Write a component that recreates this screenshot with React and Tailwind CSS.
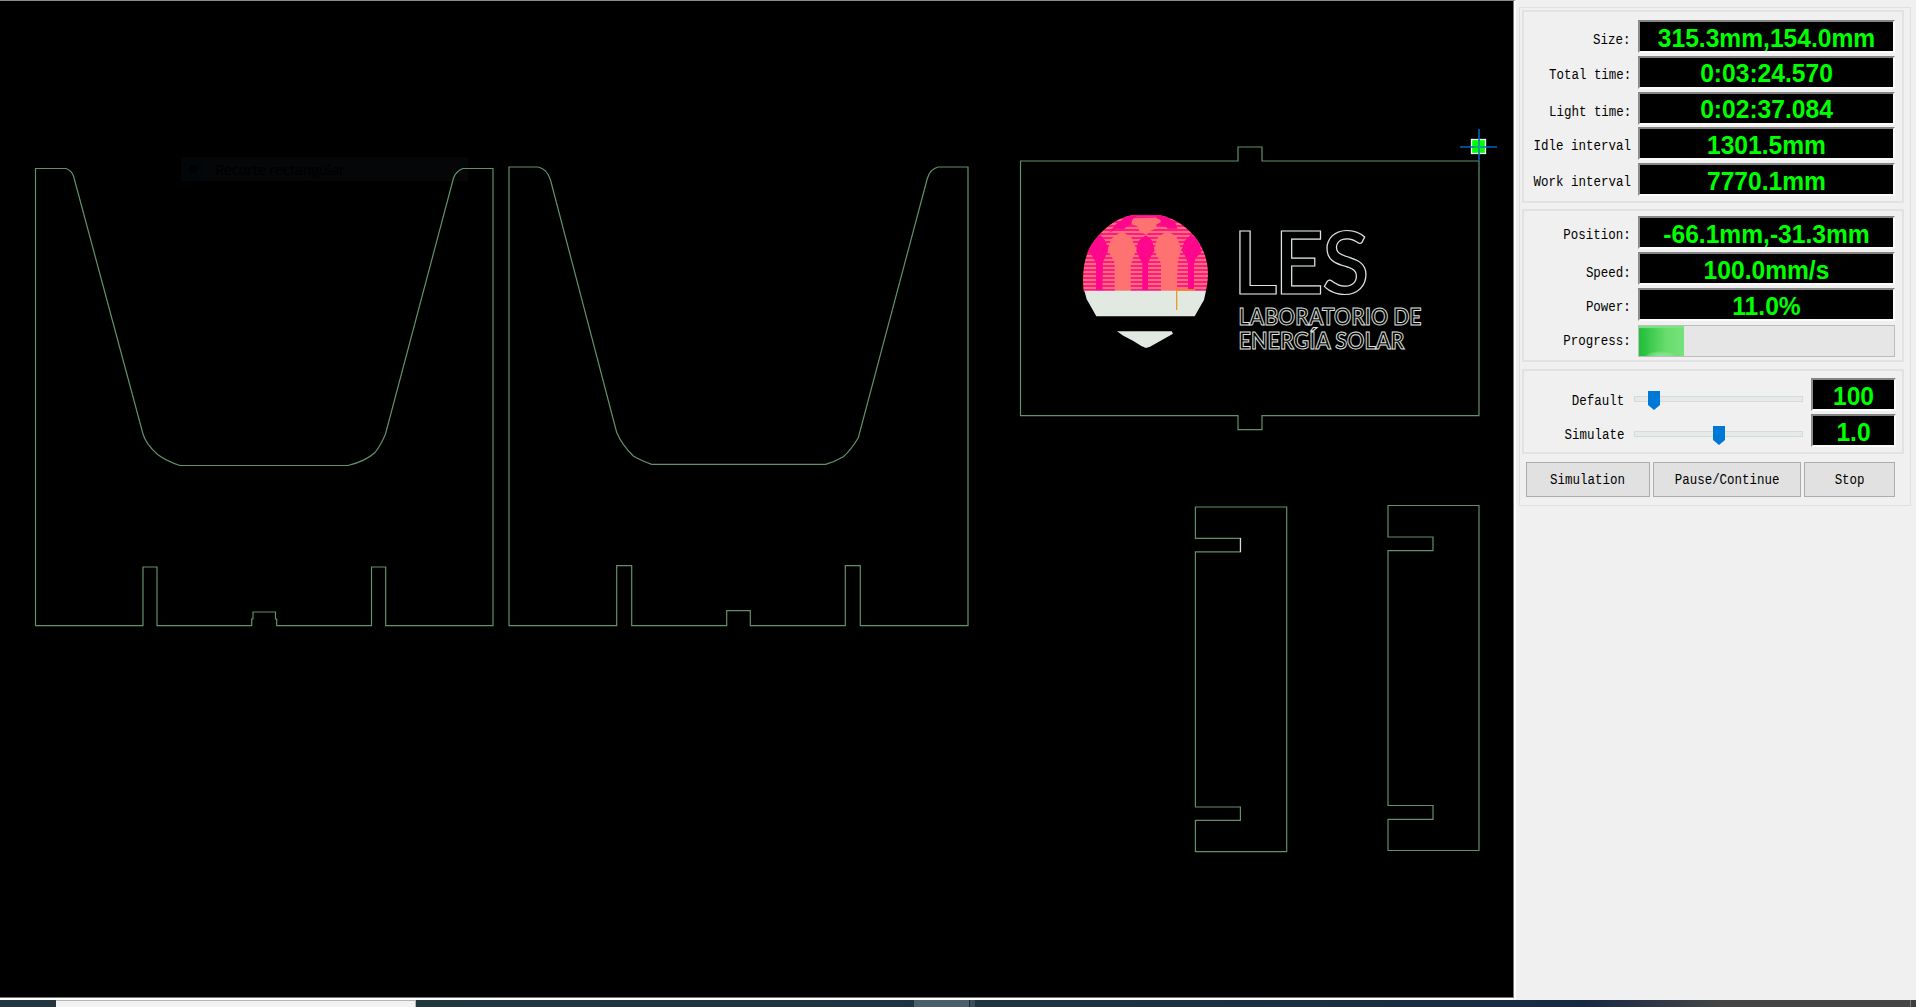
const VALUE_FONT = "font-['Liberation_Sans',sans-serif] font-bold text-[24.6px] leading-none text-[#00ff00]";

function Label({ children, className = "" }) {
  return (
    <span
      className={`inline-block origin-right scale-x-[0.805] whitespace-pre font-['Liberation_Mono',monospace] text-[15.5px] leading-4 text-black ${className}`}
    >
      {children}
    </span>
  );
}

function Display({ children, className = "w-[257px]" }) {
  return (
    <div
      className={`flex h-[33px] shrink-0 items-center justify-center border-t-2 border-r-2 border-b-2 border-l-2 border-t-[#858585] border-r-[#fbfbfb] border-b-[#fbfbfb] border-l-[#8c8c8c] bg-black ${VALUE_FONT} ${className}`}
    >
      <span className="inline-block scale-y-[1.06] pt-[3px] whitespace-nowrap">{children}</span>
    </div>
  );
}

function Row({ label, nudge = "pt-1", children }) {
  return (
    <div className="flex h-[33px] items-center justify-end">
      <div className={`flex flex-1 justify-end pr-[7px] ${nudge}`}>
        <Label>{label}</Label>
      </div>
      {children}
    </div>
  );
}

function SliderRow({ label, value, offset, nudge, track }) {
  return (
    <div className="flex h-[33px] items-center">
      <div className={`flex w-[100px] justify-end ${nudge}`}>
        <Label>{label}</Label>
      </div>
      <div className={`relative ml-[10px] h-[6px] w-[169px] border border-[#d6dada] bg-[#e7eaea] ${track}`}>
        <svg className="absolute -top-[6px] h-[19px] w-3" style={{ left: offset }} viewBox="0 0 12 19">
          <path d="M0 0H12V14L6 19L0 14Z" fill="#0078d7" />
        </svg>
      </div>
      <div className="ml-[8px]">
        <Display className="w-[85px]">{value}</Display>
      </div>
    </div>
  );
}

function Button({ children, className }) {
  return (
    <button
      className={`flex h-[35px] items-center justify-center border border-[#adadad] bg-[#e1e1e1] ${className}`}
    >
      <Label className="!origin-center">{children}</Label>
    </button>
  );
}

function Logo() {
  return (
    <g>
      <defs>
        <clipPath id="sun">
          <path d="M71 275C66 225 70 172 96 132C127 87 165 56 215 46Q257 42 300 46C350 56 390 87 417 128C445 172 450 225 437 275Z" />
        </clipPath>
        <pattern id="hatch" width="12" height="12" patternUnits="userSpaceOnUse" y="3">
          <rect width="12" height="12" fill="#ff6f76" />
          <rect width="12" height="6" fill="#ff1a88" />
        </pattern>
      </defs>
      <g transform="translate(1060 200) scale(.33333)">
        <g clipPath="url(#sun)">
          <rect x="60" y="40" width="400" height="235" fill="url(#hatch)" />
          <g fill="#ff078c">
            <path d="M120 104L134 120L147 146L137 168L129 185L127 275H108V188L92 160L70 155L98 120Z" />
            <path d="M257 106L275 120L284 150L272 171L264 190V275H247V190L239 175L228 150L236 122Z" />
            <path d="M393 104L414 116L425 155L406 176L402 195V275H384V190L377 172L365 150L374 122Z" />
            <path d="M168 72L214 40H320V50H228L212 66L222 72L202 78L192 88L170 86L148 98Z" />
            <path d="M285 45H300L345 64L352 86H324L316 79L287 74L304 64Z" />
          </g>
          <g fill="#ff7272">
            <path d="M185 94L214 112L222 132L230 148L218 176L212 198V275H164V190L158 176L143 150L154 116Z" />
            <path d="M320 94L348 108L358 132L364 148L354 180L350 275H303V190L294 174L282 148L294 112Z" />
            <path d="M220 55L287 53L304 66L287 74L292 84L270 93L259 105L238 94L234 80L214 71Z" />
          </g>
        </g>
        <path d="M73 272H438L432 300L421 319L404 349H109L90 315L80 298Z" fill="#e2e9e3" />
        <path d="M171 394H335L339 401L318 413L290 429L270 440L258 444L244 438L220 423L190 407Z" fill="#e2e9e3" />
        <path d="M350 330V270H405" fill="none" stroke="#ee9a20" strokeWidth="4" />
      </g>
      <g fill="none" stroke="#e0e8e1" strokeWidth="1.1" fontFamily="Lato, sans-serif" opacity="0.99">
        <text fontSize="87" y="293.5" strokeWidth="1.2" fontWeight="600">
          <tspan x="1232.500">L</tspan>
          <tspan x="1274">E</tspan>
          <tspan x="1322">S</tspan>
        </text>
        <g fontSize="23.5" fontWeight="700" strokeWidth="1">
          <text x="1238.5" y="324.5" textLength="183" lengthAdjust="spacingAndGlyphs">LABORATORIO DE</text>
          <text x="1238.5" y="348.5" textLength="166" lengthAdjust="spacingAndGlyphs">ENERGÍA SOLAR</text>
        </g>
      </g>
    </g>
  );
}

function CutPreview() {
  return (
    <svg className="block h-[996px] w-[1513px]" viewBox="0 1 1513 996">
      <rect x="181" y="157" width="287" height="24" fill="#050608" />
      <rect x="181" y="157" width="23" height="24" fill="#020609" />
      <circle cx="193" cy="169" r="4" fill="#000" />
      <text x="215" y="175" fontSize="15" textLength="130" fill="#000" fontFamily="Open Sans, sans-serif">
        Recorte rectangular
      </text>
      <g fill="none" stroke="#639069" strokeWidth="1.2">
        <path d="M35.5 168.5H66Q72 171 73.5 176L143 434Q146 444 157 454Q166 461 180 465.500H348Q366 461 375 452.500Q381 445 385.500 434L453.500 178Q456 171 463 168.500H493V625.700H385.700V567H371.500V625.700H276.700V619H275.500V612H253V619H251.700V625.700H157V567H143V625.700H35.500Z" />
        <path d="M509 167H538Q547 169 550.500 180L616.700 432.500Q622 445 633.300 456Q640 460 651.700 464.400H825.700Q834 462 843.300 456.700Q851 450 858.300 437.700L927.300 178.500Q930 169 938.300 167H968V625.700H860.300V565.700H845.300V625.700H750.300V610.700H726.700V625.700H631.700V565.700H616.700V625.700H509Z" />
        <path d="M1020.500 161H1238V147H1262V161H1479V415.600H1262V429.700H1238V415.600H1020.500Z" />
        <path d="M1195.400 507H1286.700V851.700H1195.400V820.400H1240.400V807H1195.400V551.800H1240.400V538.400H1195.400Z" />
        <path d="M1388 505.500H1479V850.500H1388V819.400H1433V805.500H1388V550.600H1433V537H1388Z" />
        <path d="M1240.500 538V552" stroke="#d5dcd6" />
      </g>
      <Logo />
      <rect x="1471.500" y="139.500" width="14" height="14" fill="#00ff00" stroke="#f4fff4" strokeWidth="1.3" />
      <path d="M1460 147H1497M1479 129V161" stroke="#0064c0" strokeWidth="1.6" />
      <path d="M1473 147H1485M1479 141V153" stroke="#17a68a" strokeWidth="1.6" />
    </svg>
  );
}

function Taskbar() {
  return (
    <div className="flex h-[7px] w-full bg-[#22363f]">
      <div className="w-14 bg-[#22363f]" />
      <div className="w-[360px] border-t border-r border-[#b5b5b5] bg-[#f2f2f2]" />
      <div className="w-[498px] bg-linear-to-r from-[#22383f] to-[#203240]" />
      <div className="w-14 border-r border-[#1c2b33] bg-[#4c5e67]" />
      <div className="w-[5px] bg-[#3b4d56]" />
      <div className="w-[612px] bg-linear-to-r from-[#20343f] to-[#1a2943]" />
      <div className="w-[136px] bg-linear-to-r from-[#1a2943] to-[#454545]" />
      <div className="flex-1 bg-[#454545]" />
      <div className="w-[6px] border-l border-[#777777] bg-[#3f3f3f]" />
    </div>
  );
}

const GROUP = "border-2 border-[#e2e2e2]";

export default function App() {
  return (
    <div className="flex h-[1007px] w-[1916px] flex-col overflow-hidden bg-[#f0f0f0]">
      <div className="flex h-[1000px]">
        <div className="w-[1516px] border-t border-r-2 border-b-2 border-t-[#8a8a8a] border-r-white border-b-white bg-black">
          <div className="h-[997px] w-[1514px] border-r border-b border-r-[#777777] border-b-[#777777]">
            <CutPreview />
          </div>
        </div>
        <aside className="w-[400px] pt-[7px] pl-[3px]">
          <div className="h-[499px] w-[392px] border border-[#e0e0e0] pt-[2px] pl-[2px]">
            <section className={`h-[193px] w-[382px] ${GROUP} pt-2 pr-[7px]`}>
              <div className="flex flex-col gap-[2.75px]">
                <Row label="Size:" nudge="pt-1.5">
                  <Display>315.3mm,154.0mm</Display>
                </Row>
                <Row label="Total time:" nudge="pt-1.5">
                  <Display>0:03:24.570</Display>
                </Row>
                <Row label="Light time:" nudge="pt-2">
                  <Display>0:02:37.084</Display>
                </Row>
                <Row label="Idle interval" nudge="pt-1">
                  <Display>1301.5mm</Display>
                </Row>
                <Row label="Work interval" nudge="pt-1">
                  <Display>7770.1mm</Display>
                </Row>
              </div>
            </section>
            <section className={`mt-[6px] h-[153px] w-[382px] ${GROUP} pt-[5px] pr-[7px]`}>
              <div className="flex flex-col gap-[3px]">
                <Row label="Position:" nudge="pt-1">
                  <Display>-66.1mm,-31.3mm</Display>
                </Row>
                <Row label="Speed:" nudge="pt-2">
                  <Display>100.0mm/s</Display>
                </Row>
                <Row label="Power:" nudge="pt-1">
                  <Display>11.0%</Display>
                </Row>
                <Row label="Progress:" nudge="pt-0">
                  <div className="h-8 w-[257px] border border-[#bcbcbc] bg-[#e6e6e6]">
                    <div className="h-full w-[45px] bg-[radial-gradient(ellipse_16px_5px_at_22px_100%,#8be694_0%,#8be69488_70%,transparent_100%),linear-gradient(90deg,#20bd38,#67dc6c_60%,#75e27c)] shadow-[inset_0_2px_1px_#7be681]" />
                  </div>
                </Row>
              </div>
            </section>
            <section className={`mt-[7px] h-[85px] w-[382px] ${GROUP} pt-[7px]`}>
              <div className="flex flex-col gap-[3px]">
                <SliderRow label="Default" value="100" offset={13} nudge="pt-3" track="mt-[9px]" />
                <SliderRow label="Simulate" value="1.0" offset={78} nudge="pt-2" track="mt-[7px]" />
              </div>
            </section>
            <div className="mt-[8px] flex pl-1">
              <Button className="w-[124px]">Simulation</Button>
              <Button className="ml-[3px] w-[148px]">Pause/Continue</Button>
              <Button className="ml-[3px] w-[91px]">Stop</Button>
            </div>
          </div>
        </aside>
      </div>
      <Taskbar />
    </div>
  );
}
